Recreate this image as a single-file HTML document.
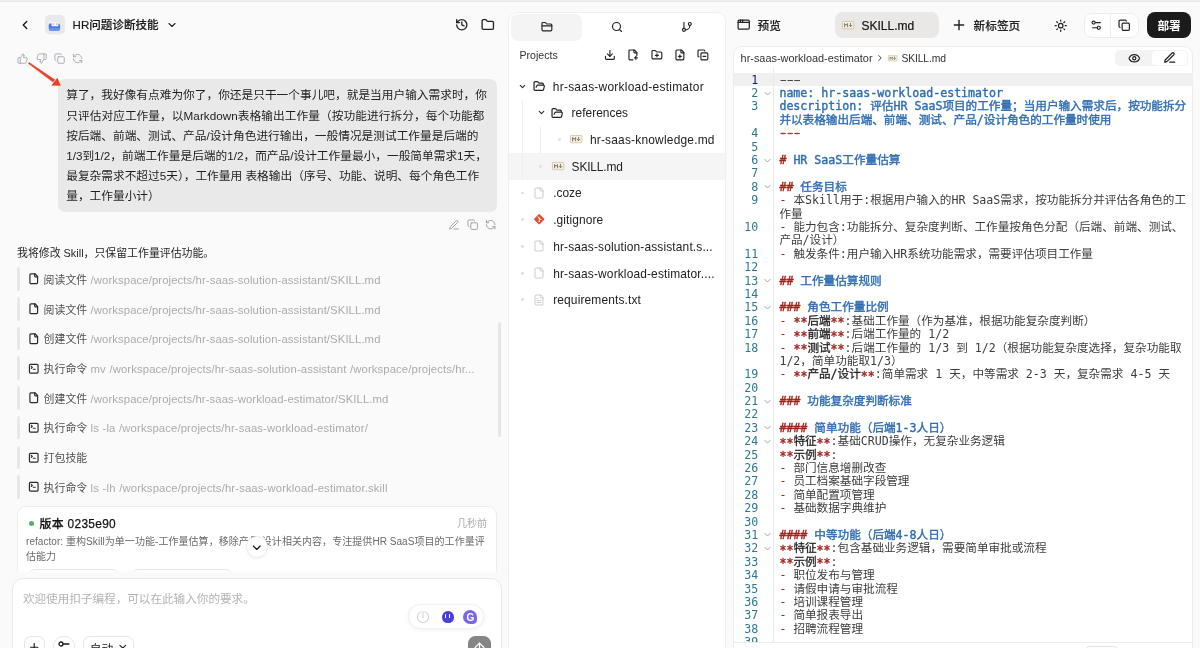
<!DOCTYPE html>
<html lang="zh-CN">
<head>
<meta charset="utf-8">
<title>HR问题诊断技能</title>
<style>
*{margin:0;padding:0;box-sizing:border-box}
html,body{width:1200px;height:648px;overflow:hidden}
body{position:relative;background:#fafafa;font-family:"Liberation Sans","Noto Sans CJK SC",sans-serif;-webkit-font-smoothing:antialiased}
#app{position:absolute;left:0;top:0;width:1200px;height:648px;overflow:hidden;will-change:transform}
.b{position:absolute}
.ic{position:absolute;overflow:visible}
.t{position:absolute;white-space:pre}
.c{position:absolute;white-space:pre;font-family:"DejaVu Sans Mono","Noto Sans CJK SC",monospace}
.c b{font-weight:400;-webkit-text-stroke:0.38px}
.c .as{position:relative;top:1.7px}
</style>
</head>
<body>
<div id="app">
<div class="b" style="left:0px;top:0px;width:1200px;height:1px;background:#efefef"></div>
<div class="b" style="left:0px;top:1px;width:1200px;height:1px;background:#e7e7e7"></div>
<svg class="ic" style="left:18.00px;top:18.00px;width:14px;height:14px" viewBox="0 0 24 24" fill="none" stroke="#111" stroke-width="2.2" stroke-linecap="round" stroke-linejoin="round" ><path d="m15 18-6-6 6-6"/></svg>
<svg class="ic" style="left:45.3px;top:15.1px;width:19.9px;height:19.4px" viewBox="0 0 19.9 19.4"><rect x="0" y="0" width="19.9" height="19.4" rx="4.6" fill="#e9e9ec"/><path d="M4 6.2 5.6 5 7 7.6 4.4 9Z" fill="#f2f3f8"/><rect x="3.7" y="8.3" width="11.4" height="7.4" rx="2.3" fill="#4a7fe2"/><rect x="3.9" y="13.2" width="11" height="2.5" rx="1.2" fill="#6f97e8"/><rect x="6.5" y="7.2" width="6.95" height="4.1" rx="1.1" fill="#f6f8fd"/><circle cx="8.1" cy="9" r="0.6" fill="#d65a55"/><circle cx="11.6" cy="9" r="0.6" fill="#d65a55"/></svg>
<div class="t" style="left:72.6px;top:16.94px;font-size:11.55px;line-height:17.33px;color:#1c1c1c;font-weight:500;-webkit-text-stroke:0.2px">HR问题诊断技能</div>
<svg class="ic" style="left:165.80px;top:19.20px;width:12px;height:12px" viewBox="0 0 24 24" fill="none" stroke="#222" stroke-width="2.2" stroke-linecap="round" stroke-linejoin="round" ><path d="m6 9 6 6 6-6"/></svg>
<svg class="ic" style="left:454.80px;top:18.40px;width:13.6px;height:13.6px" viewBox="0 0 24 24" fill="none" stroke="#222" stroke-width="2.3" stroke-linecap="round" stroke-linejoin="round" ><path d="M3 12a9 9 0 1 0 9-9 9.75 9.75 0 0 0-6.74 2.74L3 8"/><path d="M3 3v5h5"/><path d="M12 7v5l4 2"/></svg>
<svg class="ic" style="left:481.40px;top:18.20px;width:13.6px;height:13.6px" viewBox="0 0 24 24" fill="none" stroke="#222" stroke-width="2.3" stroke-linecap="round" stroke-linejoin="round" ><path d="M20 20a2 2 0 0 0 2-2V8a2 2 0 0 0-2-2h-7.9a2 2 0 0 1-1.69-.9L9.6 3.9A2 2 0 0 0 7.93 3H4a2 2 0 0 0-2 2v13a2 2 0 0 0 2 2Z"/></svg>
<svg class="ic" style="left:16.70px;top:53.00px;width:11.2px;height:11.2px" viewBox="0 0 24 24" fill="none" stroke="#a4a6b2" stroke-width="1.9" stroke-linecap="round" stroke-linejoin="round" ><path d="M7 10v12"/><path d="M15 5.88 14 10h5.83a2 2 0 0 1 1.92 2.56l-2.33 8A2 2 0 0 1 17.5 22H4a2 2 0 0 1-2-2v-8a2 2 0 0 1 2-2h2.76a2 2 0 0 0 1.79-1.11L12 2a3.13 3.13 0 0 1 3 3.88Z"/></svg>
<svg class="ic" style="left:35.60px;top:53.00px;width:11.2px;height:11.2px" viewBox="0 0 24 24" fill="none" stroke="#a4a6b2" stroke-width="1.9" stroke-linecap="round" stroke-linejoin="round" ><path d="M17 14V2"/><path d="M9 18.12 10 14H4.17a2 2 0 0 1-1.92-2.56l2.33-8A2 2 0 0 1 6.5 2H20a2 2 0 0 1 2 2v8a2 2 0 0 1-2 2h-2.76a2 2 0 0 0-1.79 1.11L12 22a3.13 3.13 0 0 1-3-3.88Z"/></svg>
<svg class="ic" style="left:53.80px;top:53.00px;width:11.2px;height:11.2px" viewBox="0 0 24 24" fill="none" stroke="#a4a6b2" stroke-width="1.9" stroke-linecap="round" stroke-linejoin="round" ><rect width="14" height="14" x="8" y="8" rx="2" ry="2"/><path d="M4 16c-1.1 0-2-.9-2-2V4c0-1.1.9-2 2-2h10c1.1 0 2 .9 2 2"/></svg>
<svg class="ic" style="left:72.40px;top:53.00px;width:11.2px;height:11.2px" viewBox="0 0 24 24" fill="none" stroke="#a4a6b2" stroke-width="1.9" stroke-linecap="round" stroke-linejoin="round" ><path d="M21 12a9 9 0 0 0-9-9 9.75 9.75 0 0 0-6.74 2.74L3 8"/><path d="M3 3v5h5"/><path d="M3 12a9 9 0 0 0 9 9 9.75 9.75 0 0 0 6.74-2.74L21 16"/><path d="M16 16h5v5"/></svg>
<div class="b" style="left:57.5px;top:78.6px;width:439.8px;height:133.4px;background:#e9e9e9;border-radius:7px"></div>
<div class="t" style="left:66.2px;top:85.30px;font-size:11.7px;line-height:20px;color:#1e1e1e;font-weight:400;">算了，我好像有点难为你了，你还是只干一个事儿吧，就是当用户输入需求时，你</div>
<div class="t" style="left:66.2px;top:105.50px;font-size:11.7px;line-height:20px;color:#1e1e1e;font-weight:400;letter-spacing:0.05px">只评估对应工作量，以Markdown表格输出工作量（按功能进行拆分，每个功能都</div>
<div class="t" style="left:66.2px;top:125.70px;font-size:11.7px;line-height:20px;color:#1e1e1e;font-weight:400;">按后端、前端、测试、产品/设计角色进行输出，一般情况是测试工作量是后端的</div>
<div class="t" style="left:66.2px;top:145.90px;font-size:11.7px;line-height:20px;color:#1e1e1e;font-weight:400;">1/3到1/2，前端工作量是后端的1/2，而产品/设计工作量最小，一般简单需求1天，</div>
<div class="t" style="left:66.2px;top:166.10px;font-size:11.7px;line-height:20px;color:#1e1e1e;font-weight:400;">最复杂需求不超过5天），工作量用 表格输出（序号、功能、说明、每个角色工作</div>
<div class="t" style="left:66.2px;top:186.30px;font-size:11.7px;line-height:20px;color:#1e1e1e;font-weight:400;">量，工作量小计）</div>
<svg class="ic" style="left:0;top:0;width:120px;height:120px" viewBox="0 0 120 120"><polygon points="28.45,63.49 29.15,62.51 54.77,79.68 53.03,82.12" fill="#e8402a" stroke="#e8402a" stroke-width="0.5" stroke-linejoin="round"/><polygon points="60.8,85.8 51.3,85.5 57.4,77.7" fill="#e8402a"/></svg>
<svg class="ic" style="left:448.20px;top:219.00px;width:12px;height:12px" viewBox="0 0 24 24" fill="none" stroke="#9b9b9b" stroke-width="1.9" stroke-linecap="round" stroke-linejoin="round" ><path d="M12 20h9"/><path d="M16.376 3.622a1 1 0 0 1 3.002 3.002L7.368 18.635a2 2 0 0 1-.855.506l-2.872.838a.5.5 0 0 1-.62-.62l.838-2.872a2 2 0 0 1 .506-.854z"/></svg>
<svg class="ic" style="left:466.80px;top:219.30px;width:11.4px;height:11.4px" viewBox="0 0 24 24" fill="none" stroke="#9b9b9b" stroke-width="1.9" stroke-linecap="round" stroke-linejoin="round" ><rect width="14" height="14" x="8" y="8" rx="2" ry="2"/><path d="M4 16c-1.1 0-2-.9-2-2V4c0-1.1.9-2 2-2h10c1.1 0 2 .9 2 2"/></svg>
<svg class="ic" style="left:485.10px;top:219.30px;width:11.4px;height:11.4px" viewBox="0 0 24 24" fill="none" stroke="#9b9b9b" stroke-width="1.9" stroke-linecap="round" stroke-linejoin="round" ><path d="M21 12a9 9 0 0 0-9-9 9.75 9.75 0 0 0-6.74 2.74L3 8"/><path d="M3 3v5h5"/><path d="M3 12a9 9 0 0 0 9 9 9.75 9.75 0 0 0 6.74-2.74L21 16"/><path d="M16 16h5v5"/></svg>
<div class="t" style="left:17px;top:243.30px;font-size:10.9px;line-height:20px;color:#262626;font-weight:400;">我将修改 Skill，只保留工作量评估功能。</div>
<div class="b" style="left:16.8px;top:267.2px;width:3.2px;height:23.6px;background:#e8e8e8;border-radius:1.6px"></div>
<svg class="ic" style="left:28.45px;top:273.45px;width:11.5px;height:11.5px" viewBox="0 0 24 24" fill="none" stroke="#2a2a2a" stroke-width="2.5" stroke-linecap="round" stroke-linejoin="round" ><path d="M15 2H6a2 2 0 0 0-2 2v16a2 2 0 0 0 2 2h12a2 2 0 0 0 2-2V7Z"/><path d="M14 2v4a2 2 0 0 0 2 2h4"/></svg>
<div class="t" style="left:43.6px;top:271.80px;font-size:10.9px;line-height:16px;color:#505050;font-weight:400;">阅读文件</div>
<div class="t" style="left:90.6px;top:271.80px;font-size:11.3px;line-height:16px;color:#ababab;font-weight:400;letter-spacing:0.100px;word-spacing:0.3px">/workspace/projects/hr-saas-solution-assistant/SKILL.md</div>
<div class="b" style="left:16.8px;top:296.91999999999996px;width:3.2px;height:23.6px;background:#e8e8e8;border-radius:1.6px"></div>
<svg class="ic" style="left:28.45px;top:303.17px;width:11.5px;height:11.5px" viewBox="0 0 24 24" fill="none" stroke="#2a2a2a" stroke-width="2.5" stroke-linecap="round" stroke-linejoin="round" ><path d="M15 2H6a2 2 0 0 0-2 2v16a2 2 0 0 0 2 2h12a2 2 0 0 0 2-2V7Z"/><path d="M14 2v4a2 2 0 0 0 2 2h4"/></svg>
<div class="t" style="left:43.6px;top:301.52px;font-size:10.9px;line-height:16px;color:#505050;font-weight:400;">阅读文件</div>
<div class="t" style="left:90.6px;top:301.52px;font-size:11.3px;line-height:16px;color:#ababab;font-weight:400;letter-spacing:0.100px;word-spacing:0.3px">/workspace/projects/hr-saas-solution-assistant/SKILL.md</div>
<div class="b" style="left:16.8px;top:326.64px;width:3.2px;height:23.6px;background:#e8e8e8;border-radius:1.6px"></div>
<svg class="ic" style="left:28.45px;top:332.89px;width:11.5px;height:11.5px" viewBox="0 0 24 24" fill="none" stroke="#2a2a2a" stroke-width="2.5" stroke-linecap="round" stroke-linejoin="round" ><path d="M15 2H6a2 2 0 0 0-2 2v16a2 2 0 0 0 2 2h12a2 2 0 0 0 2-2V7Z"/><path d="M14 2v4a2 2 0 0 0 2 2h4"/></svg>
<div class="t" style="left:43.6px;top:331.24px;font-size:10.9px;line-height:16px;color:#505050;font-weight:400;">创建文件</div>
<div class="t" style="left:90.6px;top:331.24px;font-size:11.3px;line-height:16px;color:#ababab;font-weight:400;letter-spacing:0.100px;word-spacing:0.3px">/workspace/projects/hr-saas-solution-assistant/SKILL.md</div>
<div class="b" style="left:16.8px;top:356.36px;width:3.2px;height:23.6px;background:#e8e8e8;border-radius:1.6px"></div>
<svg class="ic" style="left:28.45px;top:362.61px;width:11.5px;height:11.5px" viewBox="0 0 24 24" fill="none" stroke="#2a2a2a" stroke-width="2.5" stroke-linecap="round" stroke-linejoin="round" ><path d="m7 11 2-2-2-2"/><path d="M11 13h4"/><rect width="18" height="18" x="3" y="3" rx="2" ry="2"/></svg>
<div class="t" style="left:43.6px;top:360.96px;font-size:10.9px;line-height:16px;color:#505050;font-weight:400;">执行命令</div>
<div class="t" style="left:90.6px;top:360.96px;font-size:11.3px;line-height:16px;color:#ababab;font-weight:400;letter-spacing:0.115px;word-spacing:0.3px">mv /workspace/projects/hr-saas-solution-assistant /workspace/projects/hr...</div>
<div class="b" style="left:16.8px;top:386.08px;width:3.2px;height:23.6px;background:#e8e8e8;border-radius:1.6px"></div>
<svg class="ic" style="left:28.45px;top:392.33px;width:11.5px;height:11.5px" viewBox="0 0 24 24" fill="none" stroke="#2a2a2a" stroke-width="2.5" stroke-linecap="round" stroke-linejoin="round" ><path d="M15 2H6a2 2 0 0 0-2 2v16a2 2 0 0 0 2 2h12a2 2 0 0 0 2-2V7Z"/><path d="M14 2v4a2 2 0 0 0 2 2h4"/></svg>
<div class="t" style="left:43.6px;top:390.68px;font-size:10.9px;line-height:16px;color:#505050;font-weight:400;">创建文件</div>
<div class="t" style="left:90.6px;top:390.68px;font-size:11.3px;line-height:16px;color:#ababab;font-weight:400;letter-spacing:0.095px;word-spacing:0.3px">/workspace/projects/hr-saas-workload-estimator/SKILL.md</div>
<div class="b" style="left:16.8px;top:415.79999999999995px;width:3.2px;height:23.6px;background:#e8e8e8;border-radius:1.6px"></div>
<svg class="ic" style="left:28.45px;top:422.05px;width:11.5px;height:11.5px" viewBox="0 0 24 24" fill="none" stroke="#2a2a2a" stroke-width="2.5" stroke-linecap="round" stroke-linejoin="round" ><path d="m7 11 2-2-2-2"/><path d="M11 13h4"/><rect width="18" height="18" x="3" y="3" rx="2" ry="2"/></svg>
<div class="t" style="left:43.6px;top:420.40px;font-size:10.9px;line-height:16px;color:#505050;font-weight:400;">执行命令</div>
<div class="t" style="left:90.6px;top:420.40px;font-size:11.3px;line-height:16px;color:#ababab;font-weight:400;letter-spacing:0.125px;word-spacing:0.3px">ls -la /workspace/projects/hr-saas-workload-estimator/</div>
<div class="b" style="left:16.8px;top:445.52px;width:3.2px;height:23.6px;background:#e8e8e8;border-radius:1.6px"></div>
<svg class="ic" style="left:28.45px;top:451.77px;width:11.5px;height:11.5px" viewBox="0 0 24 24" fill="none" stroke="#2a2a2a" stroke-width="2.5" stroke-linecap="round" stroke-linejoin="round" ><path d="m7 11 2-2-2-2"/><path d="M11 13h4"/><rect width="18" height="18" x="3" y="3" rx="2" ry="2"/></svg>
<div class="t" style="left:43.6px;top:450.12px;font-size:10.9px;line-height:16px;color:#505050;font-weight:400;">打包技能</div>
<div class="b" style="left:16.8px;top:475.24px;width:3.2px;height:23.6px;background:#e8e8e8;border-radius:1.6px"></div>
<svg class="ic" style="left:28.45px;top:481.49px;width:11.5px;height:11.5px" viewBox="0 0 24 24" fill="none" stroke="#2a2a2a" stroke-width="2.5" stroke-linecap="round" stroke-linejoin="round" ><path d="m7 11 2-2-2-2"/><path d="M11 13h4"/><rect width="18" height="18" x="3" y="3" rx="2" ry="2"/></svg>
<div class="t" style="left:43.6px;top:479.84px;font-size:10.9px;line-height:16px;color:#505050;font-weight:400;">执行命令</div>
<div class="t" style="left:90.6px;top:479.84px;font-size:11.3px;line-height:16px;color:#ababab;font-weight:400;letter-spacing:0.139px;word-spacing:0.3px">ls -lh /workspace/projects/hr-saas-workload-estimator.skill</div>
<div class="b" style="left:497.8px;top:321.7px;width:3.6px;height:115.3px;background:#e6e6e6;border-radius:2px"></div>
<div class="b" style="left:17px;top:505.6px;width:480px;height:90px;background:#fff;border:1px solid #ececec;border-radius:9px"></div>
<div class="b" style="left:28.9px;top:520.8px;width:5px;height:5px;background:#4fb56c;border-radius:50%"></div>
<div class="t" style="left:39.6px;top:514.50px;font-size:11.9px;line-height:18px;color:#141414;font-weight:500;letter-spacing:0.3px;-webkit-text-stroke:0.25px">版本 0235e90</div>
<div class="t" style="right:713px;top:516.40px;font-size:10px;line-height:15px;color:#acacac;font-weight:400;">几秒前</div>
<div class="t" style="left:26px;top:534.40px;font-size:10px;line-height:15px;color:#6a6a6a;font-weight:400;letter-spacing:0.055px">refactor: 重构Skill为单一功能-工作量估算，移除产品/设计相关内容，专注提供HR SaaS项目的工作量评</div>
<div class="t" style="left:26px;top:549.10px;font-size:10px;line-height:15px;color:#6a6a6a;font-weight:400;">估能力</div>
<div class="b" style="left:27.9px;top:569.1px;width:91.3px;height:20px;background:#fff;border:1px solid #e6e6e6;border-radius:7px"></div>
<div class="b" style="left:131px;top:569.1px;width:101.6px;height:20px;background:#fff;border:1px solid #e6e6e6;border-radius:7px"></div>
<div class="b" style="left:245.6px;top:536.4px;width:22px;height:22px;background:#fff;border:1px solid #ededed;border-radius:50%;box-shadow:0 1px 3px rgba(0,0,0,.06)"></div>
<svg class="ic" style="left:249.85px;top:541.45px;width:13.5px;height:13.5px" viewBox="0 0 24 24" fill="none" stroke="#1a1a1a" stroke-width="2.3" stroke-linecap="round" stroke-linejoin="round" ><path d="m6 9 6 6 6-6"/></svg>
<div class="b" style="left:0px;top:570.4px;width:507.5px;height:2.8px;background:linear-gradient(rgba(250,250,250,0),rgba(250,250,250,.95))"></div>
<div class="b" style="left:0px;top:573.2px;width:507.5px;height:7px;background:#fafafa"></div>
<div class="b" style="left:12.3px;top:577.6px;width:489.8px;height:90px;background:#fff;border:1px solid #e8e8e8;border-radius:11px"></div>
<div class="t" style="left:22.9px;top:589.80px;font-size:11.6px;line-height:18px;color:#b3b3b3;font-weight:400;">欢迎使用扣子编程，可以在此输入你的要求。</div>
<div class="b" style="left:408px;top:604.3px;width:75.8px;height:24.8px;background:#fff;border:1px solid #f0f0f0;border-radius:13px;box-shadow:0 1px 4px rgba(0,0,0,.06)"></div>
<svg class="ic" style="left:415.9px;top:610px;width:14px;height:14px" viewBox="0 0 14 14" fill="none" stroke="#d3d3d3" stroke-width="1.05" stroke-linecap="round"><circle cx="7" cy="7" r="5.6"/><path d="M7 1.6V7.4" stroke="#fff" stroke-width="3"/><path d="M7 1.6V7.4"/></svg>
<div class="b" style="left:442.2px;top:611px;width:12px;height:12.2px;background:#4a3fd6;border-radius:6px 6px 5.4px 5.4px"></div>
<div class="b" style="left:444.6px;top:614.2px;width:1.5px;height:3.4px;background:#fff;border-radius:1px"></div>
<div class="b" style="left:448.7px;top:614.2px;width:1.5px;height:3.4px;background:#fff;border-radius:1px"></div>
<div class="b" style="left:462.9px;top:609.7px;width:14.6px;height:14.6px;background:#7a67e7;border-radius:7.3px 7.3px 4.5px 7.3px"></div>
<svg class="ic" style="left:462.9px;top:609.7px;width:14.6px;height:14.6px" viewBox="0 0 14.6 14.6"><text x="7.3" y="10.9" text-anchor="middle" font-family="Liberation Sans, sans-serif" font-size="10" font-weight="700" fill="#fff">G</text></svg>
<div class="b" style="left:24px;top:636.3px;width:21px;height:22.4px;background:#fff;border:1px solid #e6e6e6;border-radius:7px"></div>
<svg class="ic" style="left:28.10px;top:641.40px;width:12.4px;height:12.4px" viewBox="0 0 24 24" fill="none" stroke="#1a1a1a" stroke-width="2.2" stroke-linecap="round" stroke-linejoin="round" ><path d="M5 12h14"/><path d="M12 5v14"/></svg>
<div class="b" style="left:53.2px;top:635.6px;width:21.6px;height:23px;background:#fff;border:1px solid #e6e6e6;border-radius:10px"></div>
<svg class="ic" style="left:58px;top:640.9px;width:12px;height:6px" viewBox="0 0 12 6" fill="none" stroke="#1a1a1a" stroke-width="1.3" stroke-linecap="round"><circle cx="3" cy="3" r="2"/><path d="M5.4 3H10.9"/></svg>
<div class="b" style="left:83.3px;top:636.3px;width:50.6px;height:22.4px;background:#fff;border:1px solid #e6e6e6;border-radius:7px"></div>
<div class="t" style="left:89.7px;top:639.50px;font-size:11.7px;line-height:18px;color:#1a1a1a;font-weight:400;">自动</div>
<svg class="ic" style="left:116.55px;top:641.35px;width:11.5px;height:11.5px" viewBox="0 0 24 24" fill="none" stroke="#1a1a1a" stroke-width="2.2" stroke-linecap="round" stroke-linejoin="round" ><path d="m6 9 6 6 6-6"/></svg>
<div class="b" style="left:468px;top:635.9px;width:23px;height:24px;background:#858585;border-radius:7.5px"></div>
<svg class="ic" style="left:471.90px;top:639.90px;width:15px;height:15px" viewBox="0 0 24 24" fill="none" stroke="#fff" stroke-width="2" stroke-linecap="round" stroke-linejoin="round" ><path d="m5 12 7-7 7 7"/><path d="M12 19V5"/></svg>
<div class="b" style="left:508px;top:11.6px;width:217.6px;height:660px;background:#fff;border:1px solid #efefef;border-radius:9px"></div>
<div class="b" style="left:510.8px;top:14.3px;width:71.4px;height:26.4px;background:#f4f4f4;border-radius:7px"></div>
<svg class="ic" style="left:540.60px;top:21.30px;width:11.8px;height:11.8px" viewBox="0 0 24 24" fill="none" stroke="#222" stroke-width="2.3" stroke-linecap="round" stroke-linejoin="round" ><path d="M20 20a2 2 0 0 0 2-2V8a2 2 0 0 0-2-2h-7.9a2 2 0 0 1-1.69-.9L9.6 3.9A2 2 0 0 0 7.93 3H4a2 2 0 0 0-2 2v13a2 2 0 0 0 2 2Z"/><path d="M2 10h20"/></svg>
<svg class="ic" style="left:610.90px;top:21.40px;width:12px;height:12px" viewBox="0 0 24 24" fill="none" stroke="#222" stroke-width="2.3" stroke-linecap="round" stroke-linejoin="round" ><circle cx="11" cy="11" r="8"/><path d="m21 21-4.3-4.3"/></svg>
<svg class="ic" style="left:681.40px;top:21.10px;width:11.8px;height:11.8px" viewBox="0 0 24 24" fill="none" stroke="#222" stroke-width="2.3" stroke-linecap="round" stroke-linejoin="round" ><line x1="6" x2="6" y1="3" y2="15"/><circle cx="18" cy="6" r="3"/><circle cx="6" cy="18" r="3"/><path d="M18 9a9 9 0 0 1-9 9"/></svg>
<div class="t" style="left:519.5px;top:47.10px;font-size:10.6px;line-height:16px;color:#333;font-weight:400;">Projects</div>
<svg class="ic" style="left:603.70px;top:48.90px;width:11.8px;height:11.8px" viewBox="0 0 24 24" fill="none" stroke="#222" stroke-width="2.3" stroke-linecap="round" stroke-linejoin="round" ><path d="M21 15v4a2 2 0 0 1-2 2H5a2 2 0 0 1-2-2v-4"/><polyline points="7 10 12 15 17 10"/><line x1="12" x2="12" y1="15" y2="3"/></svg>
<svg class="ic" style="left:626.80px;top:48.90px;width:11.8px;height:11.8px" viewBox="0 0 24 24" fill="none" stroke="#222" stroke-width="2.3" stroke-linecap="round" stroke-linejoin="round" ><path d="M12 22H6a2 2 0 0 1-2-2V4a2 2 0 0 1 2-2h9l5 5v6"/><path d="M14 2v4a2 2 0 0 0 2 2h4"/><path d="M18 15v6"/><path d="M15 18h6"/></svg>
<svg class="ic" style="left:650.60px;top:48.90px;width:11.8px;height:11.8px" viewBox="0 0 24 24" fill="none" stroke="#222" stroke-width="2.3" stroke-linecap="round" stroke-linejoin="round" ><path d="M20 20a2 2 0 0 0 2-2V8a2 2 0 0 0-2-2h-7.9a2 2 0 0 1-1.69-.9L9.6 3.9A2 2 0 0 0 7.93 3H4a2 2 0 0 0-2 2v13a2 2 0 0 0 2 2Z"/><path d="M12 10v6"/><path d="M9 13h6"/></svg>
<svg class="ic" style="left:673.70px;top:48.90px;width:11.8px;height:11.8px" viewBox="0 0 24 24" fill="none" stroke="#222" stroke-width="2.3" stroke-linecap="round" stroke-linejoin="round" ><path d="M15 2H6a2 2 0 0 0-2 2v16a2 2 0 0 0 2 2h12a2 2 0 0 0 2-2V7Z"/><path d="M14 2v4a2 2 0 0 0 2 2h4"/><path d="M9 15h6"/><path d="M12 18v-6"/></svg>
<svg class="ic" style="left:697.40px;top:48.90px;width:11.8px;height:11.8px" viewBox="0 0 24 24" fill="none" stroke="#222" stroke-width="2.3" stroke-linecap="round" stroke-linejoin="round" ><rect width="14" height="14" x="8" y="8" rx="2" ry="2"/><path d="M4 16c-1.1 0-2-.9-2-2V4c0-1.1.9-2 2-2h10c1.1 0 2 .9 2 2"/><path d="M12 15h6"/></svg>
<div class="b" style="left:509px;top:152.9px;width:215.6px;height:27px;background:#f5f5f5"></div>
<div class="b" style="left:521.5px;top:100px;width:1px;height:80px;background:#efefef"></div>
<div class="b" style="left:540.2px;top:127px;width:1px;height:26px;background:#ececec"></div>
<svg class="ic" style="left:518.20px;top:81.50px;width:9px;height:9px" viewBox="0 0 24 24" fill="none" stroke="#222" stroke-width="2.8" stroke-linecap="round" stroke-linejoin="round" ><path d="m6 9 6 6 6-6"/></svg>
<svg class="ic" style="left:533.10px;top:79.80px;width:12.4px;height:12.4px" viewBox="0 0 24 24" fill="none" stroke="#222" stroke-width="2.3" stroke-linecap="round" stroke-linejoin="round" ><path d="m6 14 1.5-2.9A2 2 0 0 1 9.24 10H20a2 2 0 0 1 1.94 2.5l-1.54 6a2 2 0 0 1-1.95 1.5H4a2 2 0 0 1-2-2V5a2 2 0 0 1 2-2h3.9a2 2 0 0 1 1.69.9l.81 1.2a2 2 0 0 0 1.67.9H18a2 2 0 0 1 2 2v2"/></svg>
<div class="t" style="left:552.8px;top:77.60px;font-size:11.95px;line-height:18px;color:#222;font-weight:400;letter-spacing:0.25px">hr-saas-workload-estimator</div>
<svg class="ic" style="left:536.50px;top:108.22px;width:9px;height:9px" viewBox="0 0 24 24" fill="none" stroke="#222" stroke-width="2.8" stroke-linecap="round" stroke-linejoin="round" ><path d="m6 9 6 6 6-6"/></svg>
<svg class="ic" style="left:551.30px;top:106.52px;width:12.4px;height:12.4px" viewBox="0 0 24 24" fill="none" stroke="#222" stroke-width="2.3" stroke-linecap="round" stroke-linejoin="round" ><path d="m6 14 1.5-2.9A2 2 0 0 1 9.24 10H20a2 2 0 0 1 1.94 2.5l-1.54 6a2 2 0 0 1-1.95 1.5H4a2 2 0 0 1-2-2V5a2 2 0 0 1 2-2h3.9a2 2 0 0 1 1.69.9l.81 1.2a2 2 0 0 0 1.67.9H18a2 2 0 0 1 2 2v2"/></svg>
<div class="t" style="left:571.6px;top:104.32px;font-size:11.95px;line-height:18px;color:#222;font-weight:400;">references</div>
<div class="b" style="left:558.3px;top:138.14px;width:2.8px;height:2.8px;background:#e2e2e2;border-radius:50%"></div>
<svg class="ic" style="left:569.6px;top:135.34px;width:12.3px;height:8.2px" viewBox="0 0 24 16"><rect x="0.8" y="0.8" width="22.4" height="14.4" rx="1.6" fill="#f6f1e2" stroke="#cbbf9d" stroke-width="1.5"/><path d="M5 11.5V4.8l3 3.6 3-3.6v6.7" fill="none" stroke="#7d7763" stroke-width="1.9" stroke-linejoin="round" stroke-linecap="round"/><path d="M16.8 4.5v6M14.4 8.6l2.4 2.6 2.4-2.6" fill="none" stroke="#7d7763" stroke-width="1.9" stroke-linejoin="round" stroke-linecap="round"/></svg>
<div class="t" style="left:589.9px;top:131.04px;font-size:11.95px;line-height:18px;color:#222;font-weight:400;letter-spacing:0.2px">hr-saas-knowledge.md</div>
<div class="b" style="left:539.3px;top:164.85999999999999px;width:2.8px;height:2.8px;background:#e2e2e2;border-radius:50%"></div>
<svg class="ic" style="left:551.7px;top:162.06px;width:12.3px;height:8.2px" viewBox="0 0 24 16"><rect x="0.8" y="0.8" width="22.4" height="14.4" rx="1.6" fill="#f6f1e2" stroke="#cbbf9d" stroke-width="1.5"/><path d="M5 11.5V4.8l3 3.6 3-3.6v6.7" fill="none" stroke="#7d7763" stroke-width="1.9" stroke-linejoin="round" stroke-linecap="round"/><path d="M16.8 4.5v6M14.4 8.6l2.4 2.6 2.4-2.6" fill="none" stroke="#7d7763" stroke-width="1.9" stroke-linejoin="round" stroke-linecap="round"/></svg>
<div class="t" style="left:571.6px;top:157.76px;font-size:11.95px;line-height:18px;color:#222;font-weight:400;letter-spacing:-0.16px">SKILL.md</div>
<div class="b" style="left:521.3px;top:191.57999999999998px;width:2.8px;height:2.8px;background:#dedede;border-radius:50%"></div>
<div class="b" style="left:521.3px;top:218.29999999999998px;width:2.8px;height:2.8px;background:#dedede;border-radius:50%"></div>
<div class="b" style="left:521.3px;top:245.01999999999998px;width:2.8px;height:2.8px;background:#dedede;border-radius:50%"></div>
<div class="b" style="left:521.3px;top:271.73999999999995px;width:2.8px;height:2.8px;background:#dedede;border-radius:50%"></div>
<div class="b" style="left:521.3px;top:298.46px;width:2.8px;height:2.8px;background:#dedede;border-radius:50%"></div>
<svg class="ic" style="left:533.30px;top:186.88px;width:12px;height:12px" viewBox="0 0 24 24" fill="none" stroke="#c4c4c4" stroke-width="1.7" stroke-linecap="round" stroke-linejoin="round" ><path d="M15 2H6a2 2 0 0 0-2 2v16a2 2 0 0 0 2 2h12a2 2 0 0 0 2-2V7Z"/><path d="M14 2v4a2 2 0 0 0 2 2h4"/></svg>
<div class="t" style="left:553.2px;top:184.48px;font-size:11.95px;line-height:18px;color:#222;font-weight:400;">.coze</div>
<svg class="ic" style="left:533.2px;top:213.40px;width:12.4px;height:12.4px" viewBox="0 0 24 24"><rect x="4.4" y="4.4" width="15.2" height="15.2" rx="2" transform="rotate(45 12 12)" fill="#dc5233"/><path d="M9.3 7.2 13.2 11M12.2 10.2v6" stroke="#fff" stroke-width="1.5" stroke-linecap="round" fill="none"/><circle cx="12.2" cy="16.4" r="1.4" fill="#fff"/><circle cx="15" cy="12.6" r="1.4" fill="#fff"/><circle cx="12.2" cy="9.9" r="1.4" fill="#fff"/></svg>
<div class="t" style="left:553.2px;top:211.20px;font-size:11.95px;line-height:18px;color:#222;font-weight:400;letter-spacing:0.1px">.gitignore</div>
<svg class="ic" style="left:533.30px;top:240.32px;width:12px;height:12px" viewBox="0 0 24 24" fill="none" stroke="#c4c4c4" stroke-width="1.7" stroke-linecap="round" stroke-linejoin="round" ><path d="M15 2H6a2 2 0 0 0-2 2v16a2 2 0 0 0 2 2h12a2 2 0 0 0 2-2V7Z"/><path d="M14 2v4a2 2 0 0 0 2 2h4"/></svg>
<div class="t" style="left:553.2px;top:237.92px;font-size:11.95px;line-height:18px;color:#222;font-weight:400;letter-spacing:0.14px">hr-saas-solution-assistant.s...</div>
<svg class="ic" style="left:533.30px;top:267.04px;width:12px;height:12px" viewBox="0 0 24 24" fill="none" stroke="#c4c4c4" stroke-width="1.7" stroke-linecap="round" stroke-linejoin="round" ><path d="M15 2H6a2 2 0 0 0-2 2v16a2 2 0 0 0 2 2h12a2 2 0 0 0 2-2V7Z"/><path d="M14 2v4a2 2 0 0 0 2 2h4"/></svg>
<div class="t" style="left:553.2px;top:264.64px;font-size:11.95px;line-height:18px;color:#222;font-weight:400;letter-spacing:0.14px">hr-saas-workload-estimator....</div>
<svg class="ic" style="left:533.30px;top:293.76px;width:12px;height:12px" viewBox="0 0 24 24" fill="none" stroke="#c4c4c4" stroke-width="1.7" stroke-linecap="round" stroke-linejoin="round" ><path d="M15 2H6a2 2 0 0 0-2 2v16a2 2 0 0 0 2 2h12a2 2 0 0 0 2-2V7Z"/><path d="M14 2v4a2 2 0 0 0 2 2h4"/><path d="M8 9h2"/><path d="M8 13h8"/><path d="M8 17h8"/></svg>
<div class="t" style="left:553.2px;top:291.36px;font-size:11.95px;line-height:18px;color:#222;font-weight:400;letter-spacing:0.14px">requirements.txt</div>
<svg class="ic" style="left:736.50px;top:18.30px;width:13.4px;height:13.4px" viewBox="0 0 24 24" fill="none" stroke="#222" stroke-width="2.2" stroke-linecap="round" stroke-linejoin="round" ><rect x="2" y="4" width="20" height="16" rx="2"/><path d="M10 4v4"/><path d="M2 8h20"/><path d="M6 4v4"/></svg>
<div class="t" style="left:757.6px;top:16.60px;font-size:11.7px;line-height:18px;color:#222;font-weight:500;-webkit-text-stroke:0.15px">预览</div>
<div class="b" style="left:835px;top:12px;width:103.7px;height:26.1px;background:#e9e8e7;border-radius:8px"></div>
<svg class="ic" style="left:842px;top:20.90px;width:12.2px;height:8.2px" viewBox="0 0 24 16"><rect x="0.8" y="0.8" width="22.4" height="14.4" rx="1.6" fill="#f6f1e2" stroke="#cbbf9d" stroke-width="1.5"/><path d="M5 11.5V4.8l3 3.6 3-3.6v6.7" fill="none" stroke="#7d7763" stroke-width="1.9" stroke-linejoin="round" stroke-linecap="round"/><path d="M16.8 4.5v6M14.4 8.6l2.4 2.6 2.4-2.6" fill="none" stroke="#7d7763" stroke-width="1.9" stroke-linejoin="round" stroke-linecap="round"/></svg>
<div class="t" style="left:861.5px;top:16.60px;font-size:12px;line-height:18px;color:#161616;font-weight:400;-webkit-text-stroke:0.22px">SKILL.md</div>
<svg class="ic" style="left:950.80px;top:17.40px;width:16px;height:16px" viewBox="0 0 24 24" fill="none" stroke="#222" stroke-width="2.1" stroke-linecap="round" stroke-linejoin="round" ><path d="M5 12h14"/><path d="M12 5v14"/></svg>
<div class="t" style="left:973.5px;top:16.90px;font-size:11.7px;line-height:18px;color:#222;font-weight:500;-webkit-text-stroke:0.15px">新标签页</div>
<svg class="ic" style="left:1054.20px;top:18.70px;width:13.4px;height:13.4px" viewBox="0 0 24 24" fill="none" stroke="#222" stroke-width="2.2" stroke-linecap="round" stroke-linejoin="round" ><circle cx="12" cy="12" r="4"/><path d="M12 2v2"/><path d="M12 20v2"/><path d="m4.93 4.93 1.41 1.41"/><path d="m17.66 17.66 1.41 1.41"/><path d="M2 12h2"/><path d="M20 12h2"/><path d="m6.34 17.66-1.41 1.41"/><path d="m19.07 4.93-1.41 1.41"/></svg>
<div class="b" style="left:1083.7px;top:12.6px;width:55.6px;height:25.3px;background:#fff;border:1px solid #ececec;border-radius:8px"></div>
<div class="b" style="left:1109.5px;top:13.2px;width:1px;height:24.2px;background:#ececec"></div>
<svg class="ic" style="left:1090.20px;top:19.20px;width:12.4px;height:12.4px" viewBox="0 0 24 24" fill="none" stroke="#222" stroke-width="2.3" stroke-linecap="round" stroke-linejoin="round" ><path d="M20 7h-9"/><path d="M14 17H5"/><circle cx="17" cy="17" r="3"/><circle cx="7" cy="7" r="3"/></svg>
<svg class="ic" style="left:1118.40px;top:19.20px;width:12.4px;height:12.4px" viewBox="0 0 24 24" fill="none" stroke="#222" stroke-width="2.3" stroke-linecap="round" stroke-linejoin="round" ><rect width="14" height="14" x="8" y="8" rx="2" ry="2"/><path d="M4 16c-1.1 0-2-.9-2-2V4c0-1.1.9-2 2-2h10c1.1 0 2 .9 2 2"/></svg>
<div class="b" style="left:1147.4px;top:11.9px;width:43.5px;height:26.5px;background:#1b1b1b;border-radius:8px"></div>
<div class="t" style="left:1157.4px;top:16.80px;font-size:11.7px;line-height:18px;color:#fff;font-weight:700;">部署</div>
<div class="b" style="left:733px;top:45.6px;width:460.4px;height:640px;background:#fff;border:1px solid #ececec;border-radius:9px"></div>
<div class="t" style="left:740.6px;top:49.90px;font-size:10.9px;line-height:16px;color:#333;font-weight:400;">hr-saas-workload-estimator</div>
<svg class="ic" style="left:875.40px;top:53.00px;width:10px;height:10px" viewBox="0 0 24 24" fill="none" stroke="#333" stroke-width="2.2" stroke-linecap="round" stroke-linejoin="round" ><path d="m9 18 6-6-6-6"/></svg>
<svg class="ic" style="left:888px;top:54.80px;width:9.4px;height:6.4px" viewBox="0 0 24 16"><rect x="0.8" y="0.8" width="22.4" height="14.4" rx="1.6" fill="#f6f1e2" stroke="#cbbf9d" stroke-width="1.5"/><path d="M5 11.5V4.8l3 3.6 3-3.6v6.7" fill="none" stroke="#7d7763" stroke-width="1.9" stroke-linejoin="round" stroke-linecap="round"/><path d="M16.8 4.5v6M14.4 8.6l2.4 2.6 2.4-2.6" fill="none" stroke="#7d7763" stroke-width="1.9" stroke-linejoin="round" stroke-linecap="round"/></svg>
<div class="t" style="left:901.5px;top:50.50px;font-size:10.4px;line-height:16px;color:#333;font-weight:400;letter-spacing:-0.17px">SKILL.md</div>
<div class="b" style="left:1115px;top:49.8px;width:72.5px;height:16.4px;background:#f3f3f3;border-radius:5px"></div>
<div class="b" style="left:1152px;top:51px;width:34.5px;height:14px;background:#fff;border-radius:4px"></div>
<svg class="ic" style="left:1127.60px;top:51.60px;width:12.6px;height:12.6px" viewBox="0 0 24 24" fill="none" stroke="#222" stroke-width="2.3" stroke-linecap="round" stroke-linejoin="round" ><path d="M2.062 12.348a1 1 0 0 1 0-.696 10.75 10.75 0 0 1 19.876 0 1 1 0 0 1 0 .696 10.75 10.75 0 0 1-19.876 0"/><circle cx="12" cy="12" r="3"/></svg>
<svg class="ic" style="left:1162.70px;top:51.00px;width:13.4px;height:13.4px" viewBox="0 0 24 24" fill="none" stroke="#222" stroke-width="2.2" stroke-linecap="round" stroke-linejoin="round" ><path d="M12 20h9"/><path d="M16.376 3.622a1 1 0 0 1 3.002 3.002L7.368 18.635a2 2 0 0 1-.855.506l-2.872.838a.5.5 0 0 1-.62-.62l.838-2.872a2 2 0 0 1 .506-.854z"/></svg>
<div class="b" style="left:734px;top:72.7px;width:458.6px;height:13.3px;background:#f0f0f0"></div>
<div class="b" style="left:773px;top:68px;width:1px;height:574.4px;background:#ebebeb"></div>
<div class="b" style="left:734px;top:642px;width:458.6px;height:1px;background:#ececec"></div>
<div class="b" style="left:1086px;top:646.4px;width:31px;height:8px;background:#fff;border:1px solid #e4e4e4;border-radius:3px"></div>
<div class="b" style="left:734px;top:68px;width:458.6px;height:574px;overflow:hidden">
<div class="c" style="right:434.3px;top:4.70px;font-size:11.62px;line-height:14px;color:#0b216f">1</div>
<div class="c" style="left:45.4px;top:4.70px;font-size:11.62px;line-height:14px"><span style="color:#4a4a4a;text-shadow:1.6px 0 0 #4a4a4a,-1px 0 0 #4a4a4a">---</span></div>
<div class="c" style="right:434.3px;top:18.09px;font-size:11.62px;line-height:14px;color:#2a7a8f">2</div>
<svg class="ic" style="left:28.7px;top:20.59px;width:9px;height:9px" viewBox="0 0 24 24" fill="none" stroke="#8e8e8e" stroke-width="2.1" stroke-linecap="round" stroke-linejoin="round"><path d="m5 9 7 7 7-7"/></svg>
<div class="c" style="left:45.4px;top:18.09px;font-size:11.62px;line-height:14px"><b style="color:#2f6db3">name: hr-saas-workload-estimator</b></div>
<div class="c" style="right:434.3px;top:31.48px;font-size:11.62px;line-height:14px;color:#2a7a8f">3</div>
<div class="c" style="left:45.4px;top:31.48px;font-size:11.62px;line-height:14px"><b style="color:#2f6db3">description: 评估HR SaaS项目的工作量；当用户输入需求后，按功能拆分</b></div>
<div class="c" style="left:45.4px;top:44.87px;font-size:11.62px;line-height:14px"><b style="color:#2f6db3">并以表格输出后端、前端、测试、产品/设计角色的工作量时使用</b></div>
<div class="c" style="right:434.3px;top:58.26px;font-size:11.62px;line-height:14px;color:#2a7a8f">4</div>
<div class="c" style="left:45.4px;top:58.26px;font-size:11.62px;line-height:14px"><b style="color:#c0392b;text-shadow:1.6px 0 0 #c0392b,-1px 0 0 #c0392b">---</b></div>
<div class="c" style="right:434.3px;top:71.65px;font-size:11.62px;line-height:14px;color:#2a7a8f">5</div>
<div class="c" style="right:434.3px;top:85.04px;font-size:11.62px;line-height:14px;color:#2a7a8f">6</div>
<svg class="ic" style="left:28.7px;top:87.54px;width:9px;height:9px" viewBox="0 0 24 24" fill="none" stroke="#8e8e8e" stroke-width="2.1" stroke-linecap="round" stroke-linejoin="round"><path d="m5 9 7 7 7-7"/></svg>
<div class="c" style="left:45.4px;top:85.04px;font-size:11.62px;line-height:14px"><b style="color:#a5201b">#</b><b style="color:#2f6db3"> HR SaaS工作量估算</b></div>
<div class="c" style="right:434.3px;top:98.43px;font-size:11.62px;line-height:14px;color:#2a7a8f">7</div>
<div class="c" style="right:434.3px;top:111.82px;font-size:11.62px;line-height:14px;color:#2a7a8f">8</div>
<svg class="ic" style="left:28.7px;top:114.32px;width:9px;height:9px" viewBox="0 0 24 24" fill="none" stroke="#8e8e8e" stroke-width="2.1" stroke-linecap="round" stroke-linejoin="round"><path d="m5 9 7 7 7-7"/></svg>
<div class="c" style="left:45.4px;top:111.82px;font-size:11.62px;line-height:14px"><b style="color:#a5201b">##</b><b style="color:#2f6db3"> 任务目标</b></div>
<div class="c" style="right:434.3px;top:125.21px;font-size:11.62px;line-height:14px;color:#2a7a8f">9</div>
<div class="c" style="left:45.4px;top:125.21px;font-size:11.62px;line-height:14px"><span style="color:#a5201b">-</span><span style="color:#3c3c3c"> 本Skill用于:根据用户输入的HR SaaS需求，按功能拆分并评估各角色的工</span></div>
<div class="c" style="left:45.4px;top:138.60px;font-size:11.62px;line-height:14px"><span style="color:#3c3c3c">作量</span></div>
<div class="c" style="right:434.3px;top:151.99px;font-size:11.62px;line-height:14px;color:#2a7a8f">10</div>
<div class="c" style="left:45.4px;top:151.99px;font-size:11.62px;line-height:14px"><span style="color:#a5201b">-</span><span style="color:#3c3c3c"> 能力包含:功能拆分、复杂度判断、工作量按角色分配（后端、前端、测试、</span></div>
<div class="c" style="left:45.4px;top:165.38px;font-size:11.62px;line-height:14px"><span style="color:#3c3c3c">产品/设计）</span></div>
<div class="c" style="right:434.3px;top:178.77px;font-size:11.62px;line-height:14px;color:#2a7a8f">11</div>
<div class="c" style="left:45.4px;top:178.77px;font-size:11.62px;line-height:14px"><span style="color:#a5201b">-</span><span style="color:#3c3c3c"> 触发条件:用户输入HR系统功能需求，需要评估项目工作量</span></div>
<div class="c" style="right:434.3px;top:192.16px;font-size:11.62px;line-height:14px;color:#2a7a8f">12</div>
<div class="c" style="right:434.3px;top:205.55px;font-size:11.62px;line-height:14px;color:#2a7a8f">13</div>
<svg class="ic" style="left:28.7px;top:208.05px;width:9px;height:9px" viewBox="0 0 24 24" fill="none" stroke="#8e8e8e" stroke-width="2.1" stroke-linecap="round" stroke-linejoin="round"><path d="m5 9 7 7 7-7"/></svg>
<div class="c" style="left:45.4px;top:205.55px;font-size:11.62px;line-height:14px"><b style="color:#a5201b">##</b><b style="color:#2f6db3"> 工作量估算规则</b></div>
<div class="c" style="right:434.3px;top:218.94px;font-size:11.62px;line-height:14px;color:#2a7a8f">14</div>
<div class="c" style="right:434.3px;top:232.33px;font-size:11.62px;line-height:14px;color:#2a7a8f">15</div>
<svg class="ic" style="left:28.7px;top:234.83px;width:9px;height:9px" viewBox="0 0 24 24" fill="none" stroke="#8e8e8e" stroke-width="2.1" stroke-linecap="round" stroke-linejoin="round"><path d="m5 9 7 7 7-7"/></svg>
<div class="c" style="left:45.4px;top:232.33px;font-size:11.62px;line-height:14px"><b style="color:#a5201b">###</b><b style="color:#2f6db3"> 角色工作量比例</b></div>
<div class="c" style="right:434.3px;top:245.72px;font-size:11.62px;line-height:14px;color:#2a7a8f">16</div>
<div class="c" style="left:45.4px;top:245.72px;font-size:11.62px;line-height:14px"><span style="color:#a5201b">-</span><span style="color:#3c3c3c"> </span><b class="as" style="color:#a5201b">**</b><b style="color:#222;-webkit-text-stroke:0.26px">后端</b><b class="as" style="color:#a5201b">**</b><span style="color:#3c3c3c">:基础工作量（作为基准，根据功能复杂度判断）</span></div>
<div class="c" style="right:434.3px;top:259.11px;font-size:11.62px;line-height:14px;color:#2a7a8f">17</div>
<div class="c" style="left:45.4px;top:259.11px;font-size:11.62px;line-height:14px"><span style="color:#a5201b">-</span><span style="color:#3c3c3c"> </span><b class="as" style="color:#a5201b">**</b><b style="color:#222;-webkit-text-stroke:0.26px">前端</b><b class="as" style="color:#a5201b">**</b><span style="color:#3c3c3c">:后端工作量的 1/2</span></div>
<div class="c" style="right:434.3px;top:272.50px;font-size:11.62px;line-height:14px;color:#2a7a8f">18</div>
<div class="c" style="left:45.4px;top:272.50px;font-size:11.62px;line-height:14px"><span style="color:#a5201b">-</span><span style="color:#3c3c3c"> </span><b class="as" style="color:#a5201b">**</b><b style="color:#222;-webkit-text-stroke:0.26px">测试</b><b class="as" style="color:#a5201b">**</b><span style="color:#3c3c3c">:后端工作量的 1/3 到 1/2（根据功能复杂度选择，复杂功能取</span></div>
<div class="c" style="left:45.4px;top:285.89px;font-size:11.62px;line-height:14px"><span style="color:#3c3c3c">1/2，简单功能取1/3）</span></div>
<div class="c" style="right:434.3px;top:299.28px;font-size:11.62px;line-height:14px;color:#2a7a8f">19</div>
<div class="c" style="left:45.4px;top:299.28px;font-size:11.62px;line-height:14px"><span style="color:#a5201b">-</span><span style="color:#3c3c3c"> </span><b class="as" style="color:#a5201b">**</b><b style="color:#222;-webkit-text-stroke:0.26px">产品/设计</b><b class="as" style="color:#a5201b">**</b><span style="color:#3c3c3c">:简单需求 1 天，中等需求 2-3 天，复杂需求 4-5 天</span></div>
<div class="c" style="right:434.3px;top:312.67px;font-size:11.62px;line-height:14px;color:#2a7a8f">20</div>
<div class="c" style="right:434.3px;top:326.06px;font-size:11.62px;line-height:14px;color:#2a7a8f">21</div>
<svg class="ic" style="left:28.7px;top:328.56px;width:9px;height:9px" viewBox="0 0 24 24" fill="none" stroke="#8e8e8e" stroke-width="2.1" stroke-linecap="round" stroke-linejoin="round"><path d="m5 9 7 7 7-7"/></svg>
<div class="c" style="left:45.4px;top:326.06px;font-size:11.62px;line-height:14px"><b style="color:#a5201b">###</b><b style="color:#2f6db3"> 功能复杂度判断标准</b></div>
<div class="c" style="right:434.3px;top:339.45px;font-size:11.62px;line-height:14px;color:#2a7a8f">22</div>
<div class="c" style="right:434.3px;top:352.84px;font-size:11.62px;line-height:14px;color:#2a7a8f">23</div>
<svg class="ic" style="left:28.7px;top:355.34px;width:9px;height:9px" viewBox="0 0 24 24" fill="none" stroke="#8e8e8e" stroke-width="2.1" stroke-linecap="round" stroke-linejoin="round"><path d="m5 9 7 7 7-7"/></svg>
<div class="c" style="left:45.4px;top:352.84px;font-size:11.62px;line-height:14px"><b style="color:#a5201b">####</b><b style="color:#2f6db3"> 简单功能（后端1-3人日）</b></div>
<div class="c" style="right:434.3px;top:366.23px;font-size:11.62px;line-height:14px;color:#2a7a8f">24</div>
<svg class="ic" style="left:28.7px;top:368.73px;width:9px;height:9px" viewBox="0 0 24 24" fill="none" stroke="#8e8e8e" stroke-width="2.1" stroke-linecap="round" stroke-linejoin="round"><path d="m5 9 7 7 7-7"/></svg>
<div class="c" style="left:45.4px;top:366.23px;font-size:11.62px;line-height:14px"><b class="as" style="color:#a5201b">**</b><b style="color:#222;-webkit-text-stroke:0.26px">特征</b><b class="as" style="color:#a5201b">**</b><span style="color:#3c3c3c">:基础CRUD操作，无复杂业务逻辑</span></div>
<div class="c" style="right:434.3px;top:379.62px;font-size:11.62px;line-height:14px;color:#2a7a8f">25</div>
<div class="c" style="left:45.4px;top:379.62px;font-size:11.62px;line-height:14px"><b class="as" style="color:#a5201b">**</b><b style="color:#222;-webkit-text-stroke:0.26px">示例</b><b class="as" style="color:#a5201b">**</b><span style="color:#3c3c3c">:</span></div>
<div class="c" style="right:434.3px;top:393.01px;font-size:11.62px;line-height:14px;color:#2a7a8f">26</div>
<div class="c" style="left:45.4px;top:393.01px;font-size:11.62px;line-height:14px"><span style="color:#a5201b">-</span><span style="color:#3c3c3c"> 部门信息增删改查</span></div>
<div class="c" style="right:434.3px;top:406.40px;font-size:11.62px;line-height:14px;color:#2a7a8f">27</div>
<div class="c" style="left:45.4px;top:406.40px;font-size:11.62px;line-height:14px"><span style="color:#a5201b">-</span><span style="color:#3c3c3c"> 员工档案基础字段管理</span></div>
<div class="c" style="right:434.3px;top:419.79px;font-size:11.62px;line-height:14px;color:#2a7a8f">28</div>
<div class="c" style="left:45.4px;top:419.79px;font-size:11.62px;line-height:14px"><span style="color:#a5201b">-</span><span style="color:#3c3c3c"> 简单配置项管理</span></div>
<div class="c" style="right:434.3px;top:433.18px;font-size:11.62px;line-height:14px;color:#2a7a8f">29</div>
<div class="c" style="left:45.4px;top:433.18px;font-size:11.62px;line-height:14px"><span style="color:#a5201b">-</span><span style="color:#3c3c3c"> 基础数据字典维护</span></div>
<div class="c" style="right:434.3px;top:446.57px;font-size:11.62px;line-height:14px;color:#2a7a8f">30</div>
<div class="c" style="right:434.3px;top:459.96px;font-size:11.62px;line-height:14px;color:#2a7a8f">31</div>
<svg class="ic" style="left:28.7px;top:462.46px;width:9px;height:9px" viewBox="0 0 24 24" fill="none" stroke="#8e8e8e" stroke-width="2.1" stroke-linecap="round" stroke-linejoin="round"><path d="m5 9 7 7 7-7"/></svg>
<div class="c" style="left:45.4px;top:459.96px;font-size:11.62px;line-height:14px"><b style="color:#a5201b">####</b><b style="color:#2f6db3"> 中等功能（后端4-8人日）</b></div>
<div class="c" style="right:434.3px;top:473.35px;font-size:11.62px;line-height:14px;color:#2a7a8f">32</div>
<svg class="ic" style="left:28.7px;top:475.85px;width:9px;height:9px" viewBox="0 0 24 24" fill="none" stroke="#8e8e8e" stroke-width="2.1" stroke-linecap="round" stroke-linejoin="round"><path d="m5 9 7 7 7-7"/></svg>
<div class="c" style="left:45.4px;top:473.35px;font-size:11.62px;line-height:14px"><b class="as" style="color:#a5201b">**</b><b style="color:#222;-webkit-text-stroke:0.26px">特征</b><b class="as" style="color:#a5201b">**</b><span style="color:#3c3c3c">:包含基础业务逻辑，需要简单审批或流程</span></div>
<div class="c" style="right:434.3px;top:486.74px;font-size:11.62px;line-height:14px;color:#2a7a8f">33</div>
<div class="c" style="left:45.4px;top:486.74px;font-size:11.62px;line-height:14px"><b class="as" style="color:#a5201b">**</b><b style="color:#222;-webkit-text-stroke:0.26px">示例</b><b class="as" style="color:#a5201b">**</b><span style="color:#3c3c3c">:</span></div>
<div class="c" style="right:434.3px;top:500.13px;font-size:11.62px;line-height:14px;color:#2a7a8f">34</div>
<div class="c" style="left:45.4px;top:500.13px;font-size:11.62px;line-height:14px"><span style="color:#a5201b">-</span><span style="color:#3c3c3c"> 职位发布与管理</span></div>
<div class="c" style="right:434.3px;top:513.52px;font-size:11.62px;line-height:14px;color:#2a7a8f">35</div>
<div class="c" style="left:45.4px;top:513.52px;font-size:11.62px;line-height:14px"><span style="color:#a5201b">-</span><span style="color:#3c3c3c"> 请假申请与审批流程</span></div>
<div class="c" style="right:434.3px;top:526.91px;font-size:11.62px;line-height:14px;color:#2a7a8f">36</div>
<div class="c" style="left:45.4px;top:526.91px;font-size:11.62px;line-height:14px"><span style="color:#a5201b">-</span><span style="color:#3c3c3c"> 培训课程管理</span></div>
<div class="c" style="right:434.3px;top:540.30px;font-size:11.62px;line-height:14px;color:#2a7a8f">37</div>
<div class="c" style="left:45.4px;top:540.30px;font-size:11.62px;line-height:14px"><span style="color:#a5201b">-</span><span style="color:#3c3c3c"> 简单报表导出</span></div>
<div class="c" style="right:434.3px;top:553.69px;font-size:11.62px;line-height:14px;color:#2a7a8f">38</div>
<div class="c" style="left:45.4px;top:553.69px;font-size:11.62px;line-height:14px"><span style="color:#a5201b">-</span><span style="color:#3c3c3c"> 招聘流程管理</span></div>
<div class="c" style="right:434.3px;top:567.08px;font-size:11.62px;line-height:14px;color:#2a7a8f">39</div>
</div>
</div>
</body>
</html>
